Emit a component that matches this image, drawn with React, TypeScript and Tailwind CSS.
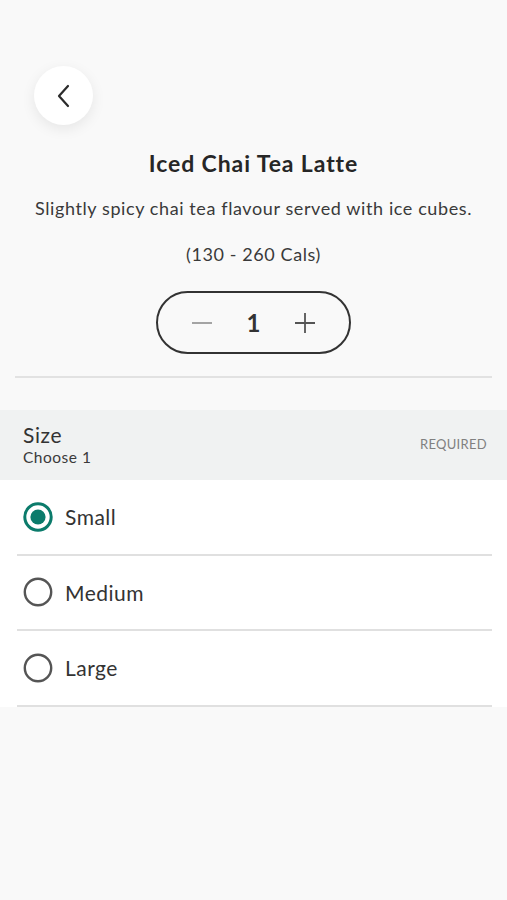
import { useState } from 'react';

const SIZES = ['Small', 'Medium', 'Large'];

function Radio({ checked }: { checked: boolean }) {
  return (
    <svg width="30" height="30" viewBox="0 0 30 30" className="shrink-0">
      <circle
        cx="15"
        cy="15"
        r="13.2"
        fill="none"
        stroke={checked ? '#0b7b6b' : '#555'}
        strokeWidth={checked ? 3 : 2.4}
      />
      {checked && <circle cx="15" cy="15" r="7.6" fill="#0b7b6b" />}
    </svg>
  );
}

export default function App() {
  const [qty, setQty] = useState(1);
  const [size, setSize] = useState('Small');

  return (
    <div className="min-h-[900px] bg-[#f9f9f9] text-[#2b2b2b] [font-family:Lato,'Noto_Sans',sans-serif]">
      {/* Top / product info */}
      <div className="px-[15px] pt-[66px]">
        <button
          onClick={() => setQty(1)}
          className="ml-[19px] flex h-[59px] w-[59px] items-center justify-center rounded-full bg-white shadow-[0_4px_14px_rgba(0,0,0,0.08)]"
          aria-label="Back"
        >
          <svg width="20" height="26" viewBox="0 0 20 26" fill="none">
            <path d="M14 3 L5 13 L14 23" stroke="#2b2b2b" strokeWidth="2.2" strokeLinecap="round" strokeLinejoin="round" />
          </svg>
        </button>

        <h1 className="mt-[23px] text-center text-[23px] font-bold leading-[30px] tracking-[0.9px] text-[#262626]">
          Iced Chai Tea Latte
        </h1>
        <p className="mt-[18px] text-center text-[18px] leading-[24px] tracking-[0.6px] text-[#3a3a3a]">
          Slightly spicy chai tea flavour served with ice cubes.
        </p>
        <p className="mt-[22px] text-center text-[18px] leading-[24px] tracking-[0.6px] text-[#3a3a3a]">
          (130 - 260 Cals)
        </p>

        <div className="mt-[25px] flex justify-center">
          <div className="flex h-[63px] w-[195px] items-center justify-between rounded-full border-[2.5px] border-[#333] px-[32px]">
            <button onClick={() => setQty(Math.max(1, qty - 1))} aria-label="Decrease">
              <svg width="24" height="24" viewBox="0 0 24 24">
                <path d="M2 12 H22" stroke="#9a9a9a" strokeWidth="1.8" />
              </svg>
            </button>
            <span className="text-[24px] font-bold text-[#333]">{qty}</span>
            <button onClick={() => setQty(qty + 1)} aria-label="Increase">
              <svg width="24" height="24" viewBox="0 0 24 24">
                <path d="M2 12 H22 M12 2 V22" stroke="#555" strokeWidth="1.8" />
              </svg>
            </button>
          </div>
        </div>

        <div className="mt-[22px] h-[2px] bg-[#e2e2e2]" />
      </div>

      {/* Size section */}
      <div className="mt-[32px] flex h-[70px] items-center justify-between bg-[#f0f2f2] pl-[23px] pr-[20px]">
        <div>
          <div className="text-[21px] leading-[25px] tracking-[0.6px] text-[#333]">Size</div>
          <div className="text-[15.5px] leading-[21px] tracking-[0.5px] text-[#3a3a3a]">Choose 1</div>
        </div>
        <div className="text-[13px] tracking-[0.3px] text-[#808080]">REQUIRED</div>
      </div>

      <div className="bg-white pl-[17px] pr-[15px]">
        {SIZES.map((s) => (
          <button
            key={s}
            onClick={() => setSize(s)}
            className="flex h-[75.5px] w-full items-center gap-[12px] border-b-2 border-[#e0e0e0] pl-[6px] text-left"
          >
            <Radio checked={size === s} />
            <span className="text-[21px] tracking-[0.5px] text-[#333]">{s}</span>
          </button>
        ))}
      </div>
    </div>
  );
}
